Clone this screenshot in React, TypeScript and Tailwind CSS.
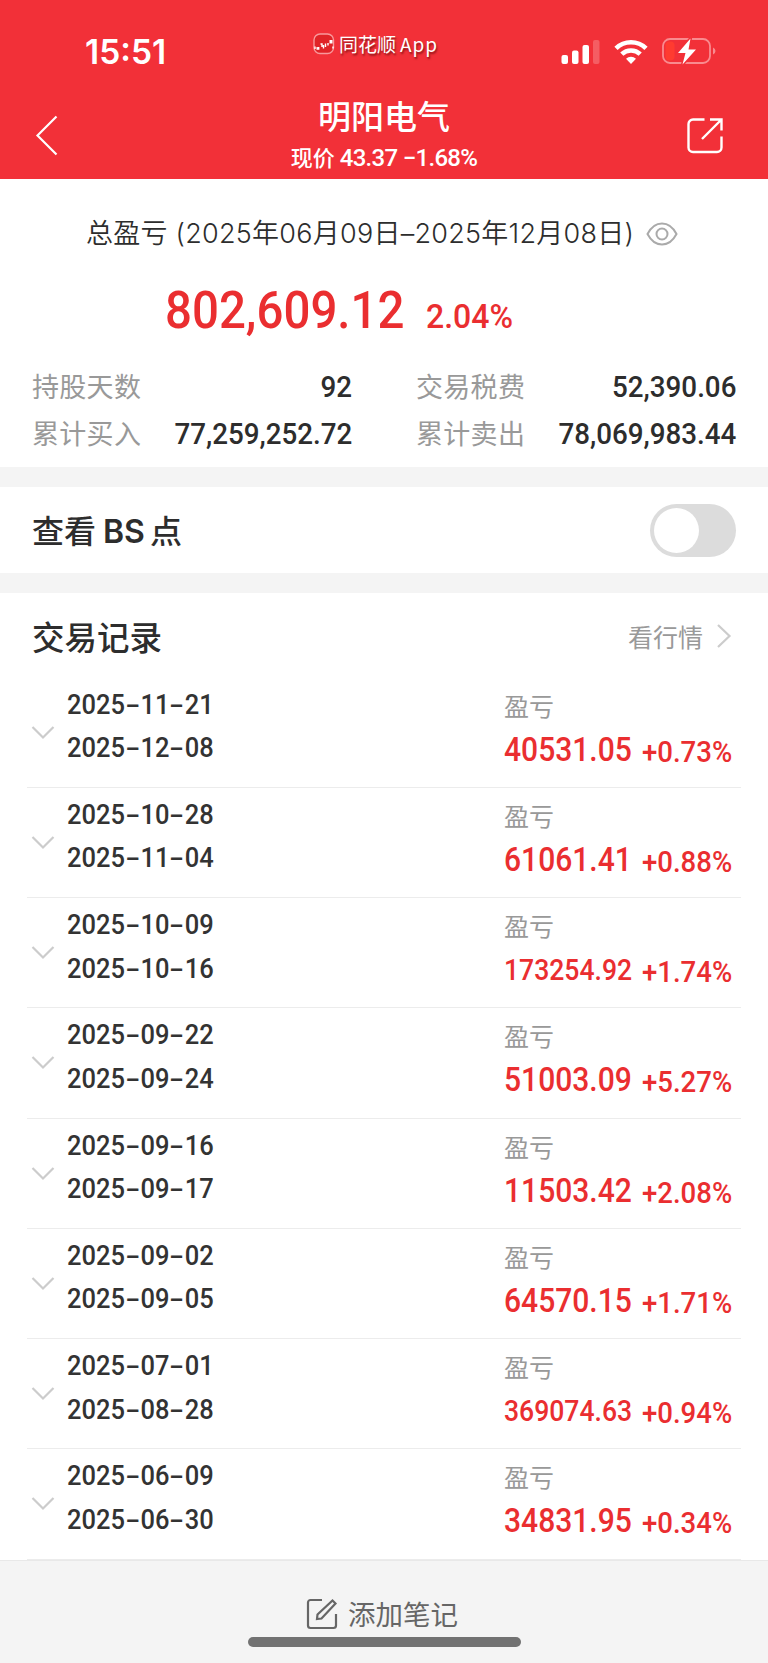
import { useState } from 'react';

interface Trade {
  start: string;
  end: string;
  profit: string;
  rate: string;
}

const trades: Trade[] = [
  { start: '2025-11-21', end: '2025-12-08', profit: '40531.05', rate: '+0.73%' },
  { start: '2025-10-28', end: '2025-11-04', profit: '61061.41', rate: '+0.88%' },
  { start: '2025-10-09', end: '2025-10-16', profit: '173254.92', rate: '+1.74%' },
  { start: '2025-09-22', end: '2025-09-24', profit: '51003.09', rate: '+5.27%' },
  { start: '2025-09-16', end: '2025-09-17', profit: '11503.42', rate: '+2.08%' },
  { start: '2025-09-02', end: '2025-09-05', profit: '64570.15', rate: '+1.71%' },
  { start: '2025-07-01', end: '2025-08-28', profit: '369074.63', rate: '+0.94%' },
  { start: '2025-06-09', end: '2025-06-30', profit: '34831.95', rate: '+0.34%' },
];

const stats = [
  { label: '持股天数', value: '92' },
  { label: '交易税费', value: '52,390.06' },
  { label: '累计买入', value: '77,259,252.72' },
  { label: '累计卖出', value: '78,069,983.44' },
];

function StatusBar() {
  return (
    <div className="flex h-[93px] items-start pt-[30px]">
      <p className="ml-[85px] mt-[2px] w-[228px] font-['Inter'] text-[33.500px] leading-[40px] font-semibold">
        15:51
      </p>
      <div className="flex w-[248px] items-center gap-[4px] leading-[28px]">
        <svg width="22" height="22" viewBox="0 0 22 22" fill="none">
          <rect x="1" y="1" width="19.5" height="19.5" rx="6" fill="#e02327" stroke="#f8989b" strokeWidth="1.4" />
          <path
            d="M2 13.500v2.500M4.200 14v2h1.500v-2M7.500 11h1.500v3M10.500 12v3.500M12.500 10.500v3.500M15 10v2.500M20 13.500v2"
            stroke="#fff"
            strokeWidth="1.400"
          />
          <rect x="16.500" y="7" width="3" height="3.500" fill="#fff" />
        </svg>
        <span className="text-[19px] [text-shadow:1px_2px_2px_rgba(70,0,0,0.6)]">
          同花顺<span className="ml-[4px] tracking-[0.9px]">App</span>
        </span>
      </div>
      <div className="mt-[7px] flex items-center">
        <svg width="39" height="26" viewBox="0 0 39 26" fill="#fff">
          <rect x="0.500" y="17" width="6.500" height="9" rx="2" />
          <rect x="11" y="12.500" width="6.500" height="13.500" rx="2" />
          <rect x="21.500" y="7" width="6.500" height="19" rx="2" />
          <rect x="32" y="2" width="6.500" height="24" rx="2" opacity="0.22" />
        </svg>
        <svg className="ml-[14px]" width="34" height="26" viewBox="0 0 34 26" fill="none" stroke="#fff">
          <path d="M2 10.300a21.500 21.500 0 0 1 30 0" strokeWidth="4.600" />
          <path d="M7.800 16.200a13.300 13.300 0 0 1 18.400 0" strokeWidth="4.600" />
          <path d="M17 26l-5-5.200a7.400 7.400 0 0 1 10 0z" fill="#fff" stroke="none" />
        </svg>
        <svg className="ml-[14px]" width="54" height="28" viewBox="0 0 54 28" fill="none">
          <rect x="1" y="2" width="47" height="24" rx="7" stroke="#f98b8f" strokeWidth="1.800" />
          <rect x="3.500" y="4.500" width="9" height="19" rx="4" fill="#ff3b30" />
          <path d="M51 10.500q2.500 1 2.500 3.500t-2.500 3.500z" fill="#f98b8f" />
          <path d="M28.500 1.500L16 16h7.500L20.500 27.500 34 12.500h-7.500z" fill="#fff" stroke="#f23038" strokeWidth="3" paintOrder="stroke" />
        </svg>
      </div>
    </div>
  );
}

function Header() {
  return (
    <header className="h-[179px] bg-[#f23038] text-white">
      <StatusBar />
      <div className="flex h-[86px] items-start justify-between pl-[35px] pr-[44px]">
        <button type="button" aria-label="返回" className="mt-[22px] w-[47px]">
          <svg width="24" height="41" viewBox="0 0 24 41" fill="none" stroke="#fff" strokeWidth="2.200">
            <path d="M21.500 1.500L2.500 20.500l19 19" />
          </svg>
        </button>
        <div className="-mt-[2px] flex flex-col items-center">
          <h1 className="text-[33px] leading-[48px] font-medium">明阳电气</h1>
          <p className="text-[22px] leading-[34px] font-medium whitespace-pre">
            现价 <span className="font-['Roboto'] text-[24px] tracking-[-0.7px]">43.37 −1.68%</span>
          </p>
        </div>
        <button type="button" aria-label="分享" className="mt-[24px]">
          <svg width="38" height="38" viewBox="0 0 38 38" fill="none" stroke="#fff" strokeWidth="2.400">
            <path d="M18.500 2.500H7A4.500 4.500 0 0 0 2.500 7v23.500A4.500 4.500 0 0 0 7 35h24a4.500 4.500 0 0 0 4.500-4.500V19.500M24 2.500h11.500v11M35.500 2.500L16 22" />
          </svg>
        </button>
      </div>
    </header>
  );
}

function Summary() {
  return (
    <section className="h-[288px] px-[32px] pt-[34px]">
      <div className="flex items-center pl-[54px] leading-[40px]">
        <p className="w-[560px] pt-px font-['Inter','Noto_Sans_CJK_SC',sans-serif] text-[27px] font-[350] tracking-[0.25px] whitespace-pre">
          总盈亏 (2025年06月09日–2025年12月08日)
        </p>
        <svg width="32" height="24" viewBox="0 0 32 24" fill="none" stroke="#aaa" strokeWidth="2">
          <path d="M1.500 12Q7 1.500 16 1.500T30.500 12Q25 22.500 16 22.500T1.500 12z" />
          <circle cx="16" cy="12" r="5.500" />
        </svg>
      </div>
      <p className="mt-[24px] flex h-[66px] items-baseline pl-[133px] font-['Roboto'] font-medium text-[#ea2e30]">
        <span className="w-[261px] origin-left scale-x-[0.93] text-[51px] leading-[66px]">802,609.12</span>
        <span className="origin-left scale-x-[0.97] text-[33px]">2.04%</span>
      </p>
      <dl className="mt-[19px] grid grid-cols-2 gap-x-[64px]">
        {stats.map((item) => (
          <div key={item.label} className="flex h-[47px] items-center justify-between">
            <dt className="text-[27px] tracking-[0.3px] text-[#999]">{item.label}</dt>
            <dd className="origin-right scale-x-[0.925] font-['Roboto'] text-[30px] font-medium text-[#2d2d2d]">
              {item.value}
            </dd>
          </div>
        ))}
      </dl>
    </section>
  );
}

function TradeDate({ value }: { value: string }) {
  const [year, month, day] = value.split('-');
  const dash = <span className="inline-block w-[17px] scale-x-[1.700] text-center">-</span>;

  return (
    <p className="origin-left scale-x-[0.91]">
      {year}
      {dash}
      {month}
      {dash}
      {day}
    </p>
  );
}

function TradeRow({ trade }: { trade: Trade }) {
  // long amounts are set one step smaller so they keep the column width
  const profitSize = trade.profit.length > 8 ? 'text-[30px] scale-x-[0.885]' : 'text-[33px] scale-x-[0.91]';

  return (
    <li className="mx-[27px] flex h-[110.25px] items-start border-b-[1.500px] border-[#ececec] pt-[5px]">
      <svg className="mt-[42px] ml-[4px]" width="24" height="16" viewBox="0 0 24 16" fill="none" stroke="#ccc" strokeWidth="2.200">
        <path d="M1.500 2L12 12.500 22.500 2" />
      </svg>
      <div className="ml-[12px] w-[437px] font-['Roboto'] text-[28px] leading-[43.500px] font-medium text-[#333]">
        <TradeDate value={trade.start} />
        <TradeDate value={trade.end} />
      </div>
      <div>
        <p className="text-[25px] leading-[44px] text-[#999]">盈亏</p>
        <div className="flex h-[46px] items-center font-['Roboto'] leading-[44px] font-medium text-[#ea2e30]">
          <p className="w-[138px]">
            <span className={`block origin-left whitespace-nowrap ${profitSize}`}>{trade.profit}</span>
          </p>
          <span className="origin-left translate-y-[2px] scale-x-[0.950] text-[29px]">{trade.rate}</span>
        </div>
      </div>
    </li>
  );
}

export default function App() {
  const [showPoints, setShowPoints] = useState(false);

  return (
    <main className="h-[1663px] w-[768px] overflow-hidden bg-white font-['Noto_Sans_CJK_SC',sans-serif] text-[#2d2d2d]">
      <Header />
      <Summary />

      <section className="flex h-[126px] items-center justify-between border-y-[20px] border-[#f4f4f4] pr-[32px] pl-[32px]">
        <h2 className="text-[32px] font-medium whitespace-pre">
          查看<span className="mr-[5px] ml-[7px] font-['Inter'] font-semibold">BS</span>点
        </h2>
        <button
          type="button"
          role="switch"
          aria-checked={showPoints}
          aria-label="查看BS点"
          onClick={() => setShowPoints(!showPoints)}
          className={`flex h-[53px] w-[86px] items-center rounded-full px-[4px] ${
            showPoints ? 'justify-end bg-[#f23038]' : 'bg-[#dcdcdc]'
          }`}
        >
          <span className="size-[45px] rounded-full bg-white" />
        </button>
      </section>

      <section>
        <div className="flex h-[84.500px] items-center justify-between pt-[2px] pr-[36px] pl-[32px]">
          <h2 className="text-[32.500px] font-medium">交易记录</h2>
          <a href="#quote" className="flex items-center text-[25px] text-[#999]">
            看行情
            <svg className="ml-[13px]" width="16" height="26" viewBox="0 0 16 26" fill="none" stroke="#ccc" strokeWidth="2.200">
              <path d="M2 2l11.500 11L2 24" />
            </svg>
          </a>
        </div>
        <ul>
          {trades.map((trade) => (
            <TradeRow key={trade.start} trade={trade} />
          ))}
        </ul>
      </section>

      <footer className="flex h-[104px] flex-col items-center border-t border-[#e8e8e8] bg-[#f4f4f4] pt-[32px]">
        <button type="button" className="mb-[2px] flex h-[42px] items-center gap-[10px] pr-[4px] text-[27.500px] text-[#666]">
          <svg width="32" height="32" viewBox="0 0 32 32" fill="none" stroke="#666" strokeWidth="2.200">
            <path d="M16 2H4.500A2.500 2.500 0 0 0 2 4.500v23A2.500 2.500 0 0 0 4.500 30h23a2.500 2.500 0 0 0 2.500-2.500V16" />
            <path d="M26.500 2.500l3 3L15.500 20.500l-4.500.5.500-4.500z" />
          </svg>
          添加笔记
        </button>
        <div className="h-[10px] w-[273px] rounded-full bg-[#727272]" />
      </footer>
    </main>
  );
}
